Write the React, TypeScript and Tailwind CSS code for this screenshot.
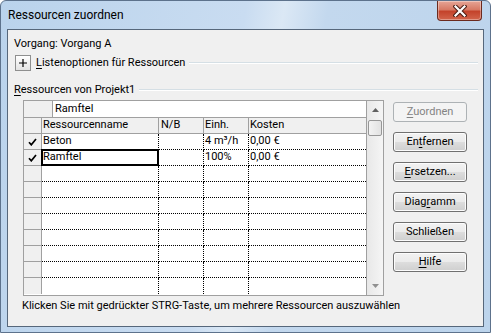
import React from 'react';

const font = "font-['Roboto','Liberation_Sans',Arial,sans-serif]";

function Check() {
  return (
    <svg width="9" height="8" viewBox="0 0 9 8" className="block">
      <path d="M1 4.2 L3.3 6.8 L8 1" fill="none" stroke="#000" strokeWidth="1.7" />
    </svg>
  );
}

function Btn({ label, u, disabled }: { label: string; u?: number; disabled?: boolean }) {
  const text =
    u === undefined ? (
      label
    ) : (
      <>
        {label.slice(0, u)}
        <span className="underline underline-offset-[2px]">{label[u]}</span>
        {label.slice(u + 1)}
      </>
    );
  if (disabled) {
    return (
      <div className="flex h-[20px] w-[74px] items-center justify-center rounded-[3px] border border-[#adb2b5] bg-[#f4f4f4] text-[#838383]">
        {text}
      </div>
    );
  }
  return (
    <div className="flex h-[20px] w-[74px] items-center justify-center rounded-[3px] border border-[#707070] bg-[linear-gradient(180deg,#f2f2f2_0%,#ebebeb_50%,#dddddd_50%,#cfcfcf_100%)] text-black shadow-[inset_0_0_0_1px_#fcfcfc]">
      {text}
    </div>
  );
}

type Row = { check?: boolean; name?: string; einh?: string; kosten?: string; sel?: boolean };

const rows: Row[] = [
  { check: true, name: 'Beton', einh: '4 m³/h', kosten: '0,00 €' },
  { check: true, name: 'Ramftel', einh: '100%', kosten: '0,00 €', sel: true },
  {}, {}, {}, {}, {}, {}, {}, {},
];

function Grid() {
  return (
    <div className="flex h-[196px] w-[361px] border border-[#a0a0a0] bg-white">
      <div className="flex w-[342px] flex-col">
        {/* edit bar */}
        <div className="flex h-[17px] border-b border-[#a0a0a0]">
          <div className="w-[29px] border-r border-[#a0a0a0] bg-[#f0f0f0]" />
          <div className="flex items-center pl-[2px]">Ramftel</div>
        </div>
        {/* header */}
        <div className="flex h-[16px] border-b border-[#a0a0a0] bg-[#f0f0f0]">
          <div className="w-[18px] border-r border-[#a0a0a0]" />
          <div className="flex w-[117px] items-center border-r border-[#a0a0a0] pl-[1px]">Ressourcenname</div>
          <div className="flex w-[45px] items-center border-r border-[#a0a0a0] pl-[2px]">N/B</div>
          <div className="flex w-[45px] items-center border-r border-[#a0a0a0] pl-[1px]">Einh.</div>
          <div className="flex flex-1 items-center pl-[1px]">Kosten</div>
        </div>
        {rows.map((r, i) => {
          const last = i === rows.length - 1;
          const b = last ? '' : 'border-b border-dotted border-black';
          return (
            <div key={i} className="flex h-[16px]">
              <div
                className={`flex w-[18px] items-center justify-center border-r border-[#a0a0a0] bg-[#f0f0f0] ${
                  last ? '' : 'border-b border-b-[#a0a0a0]'
                }`}
              >
                {r.check && <Check />}
              </div>
              <div className={`relative flex w-[117px] items-center border-r border-dotted border-r-black pl-[1px] ${b}`}>
                {r.name}
                {r.sel && <div className="absolute -left-[1px] -top-[1px] -right-[1px] -bottom-[1px] border-2 border-black" />}
              </div>
              <div className={`w-[45px] border-r border-dotted border-r-black ${b}`} />
              <div className={`flex w-[45px] items-center border-r border-dotted border-r-black pl-[1px] ${b}`}>
                {r.einh}
              </div>
              <div className={`flex flex-1 items-center pl-[1px] ${b}`}>{r.kosten}</div>
            </div>
          );
        })}
      </div>
      {/* scrollbar */}
      <div className="flex w-[17px] flex-col border-l border-[#a0a0a0] bg-[linear-gradient(90deg,#e8e8e8,#f5f5f5)]">
        <div className="flex h-[18px] items-center justify-center">
          <svg width="7" height="4" viewBox="0 0 7 4">
            <path d="M0 4 L3.5 0 L7 4 Z" fill="#606060" />
          </svg>
        </div>
        <div className="mx-[1px] mt-[1px] h-[16px] rounded-[2px] border border-[#979797] bg-[linear-gradient(90deg,#f3f3f3,#e2e2e2)]" />
        <div className="flex-1" />
        <div className="flex h-[18px] items-center justify-center">
          <svg width="7" height="4" viewBox="0 0 7 4">
            <path d="M0 0 L3.5 4 L7 0 Z" fill="#909090" />
          </svg>
        </div>
      </div>
    </div>
  );
}

export default function App() {
  return (
    <div
      className={`${font} flex h-[333px] w-[491px] flex-col overflow-hidden rounded-t-[6px] border border-[#5d728c] bg-[linear-gradient(100deg,#bad3ec_0%,#c9dcf1_45%,#dbe8f5_52%,#c3d8ee_60%,#bcd4ec_100%)] text-[11px] text-black`}
    >
      {/* title bar */}
      <div className="flex h-[28px] justify-between">
        <div className="pl-[7px] pt-[7px] text-[12px] leading-[15px]">Ressourcen zuordnen</div>
        <div className="mr-[8px] flex h-[20px] w-[45px] items-center justify-center rounded-b-[4px] border border-t-0 border-[#6b2a1e] bg-[linear-gradient(180deg,#e6a596_0%,#d77a65_45%,#c4432b_55%,#d2654c_100%)] shadow-[inset_0_0_0_1px_rgba(255,255,255,0.35)]">
          <svg width="14" height="12" viewBox="0 0 14 12">
            <path d="M2.5 1.5 L11.5 10.5 M11.5 1.5 L2.5 10.5" stroke="#4a1d14" strokeWidth="4.2" strokeLinecap="square" />
            <path d="M2.5 1.5 L11.5 10.5 M11.5 1.5 L2.5 10.5" stroke="#fff" strokeWidth="2.2" strokeLinecap="square" />
          </svg>
        </div>
      </div>
      {/* client area */}
      <div className="ml-[6px] flex h-[298px] w-[477px] flex-col border border-[#56677b] bg-[#f0f0f0] pl-[6px] pr-[5px] pt-[7px]">
        <div className="h-[14px] leading-[14px]">Vorgang: Vorgang A</div>
        <div className="mt-[4px] flex h-[16px] items-center">
          <div className="ml-[1px] flex h-[16px] w-[16px] items-center justify-center border border-[#8e8f8f] bg-[linear-gradient(180deg,#ffffff,#e3e3e3)]">
            <svg width="8" height="8" viewBox="0 0 8 8">
              <path d="M0 4 H8 M4 0 V8" stroke="#000" strokeWidth="1.2" />
            </svg>
          </div>
          <span className="ml-[5px]">
            <span className="underline underline-offset-[2px]">L</span>istenoptionen für Ressourcen
          </span>
          <div className="ml-[4px] flex-1 border-t border-b border-t-[#d5dfe5] border-b-white" />
        </div>
        <div className="mt-[12px] flex h-[14px] items-center">
          <span>
            <span className="underline underline-offset-[2px]">R</span>essourcen von Projekt1
          </span>
          <div className="ml-[4px] flex-1 border-t border-b border-t-[#d5dfe5] border-b-white" />
        </div>
        <div className="mt-[3px] flex">
          <div className="ml-[9px]">
            <Grid />
          </div>
          <div className="ml-[9px] mt-[2px] flex flex-col gap-[10px]">
            <Btn label="Zuordnen" u={0} disabled />
            <Btn label="Entfernen" u={2} />
            <Btn label="Ersetzen..." u={0} />
            <Btn label="Diagramm" u={4} />
            <Btn label="Schließen" />
            <Btn label="Hilfe" u={0} />
          </div>
        </div>
        <div className="ml-[8px] mt-[3px] h-[14px] leading-[14px]">
          Klicken Sie mit gedrückter STRG-Taste, um mehrere Ressourcen auszuwählen
        </div>
      </div>
    </div>
  );
}
